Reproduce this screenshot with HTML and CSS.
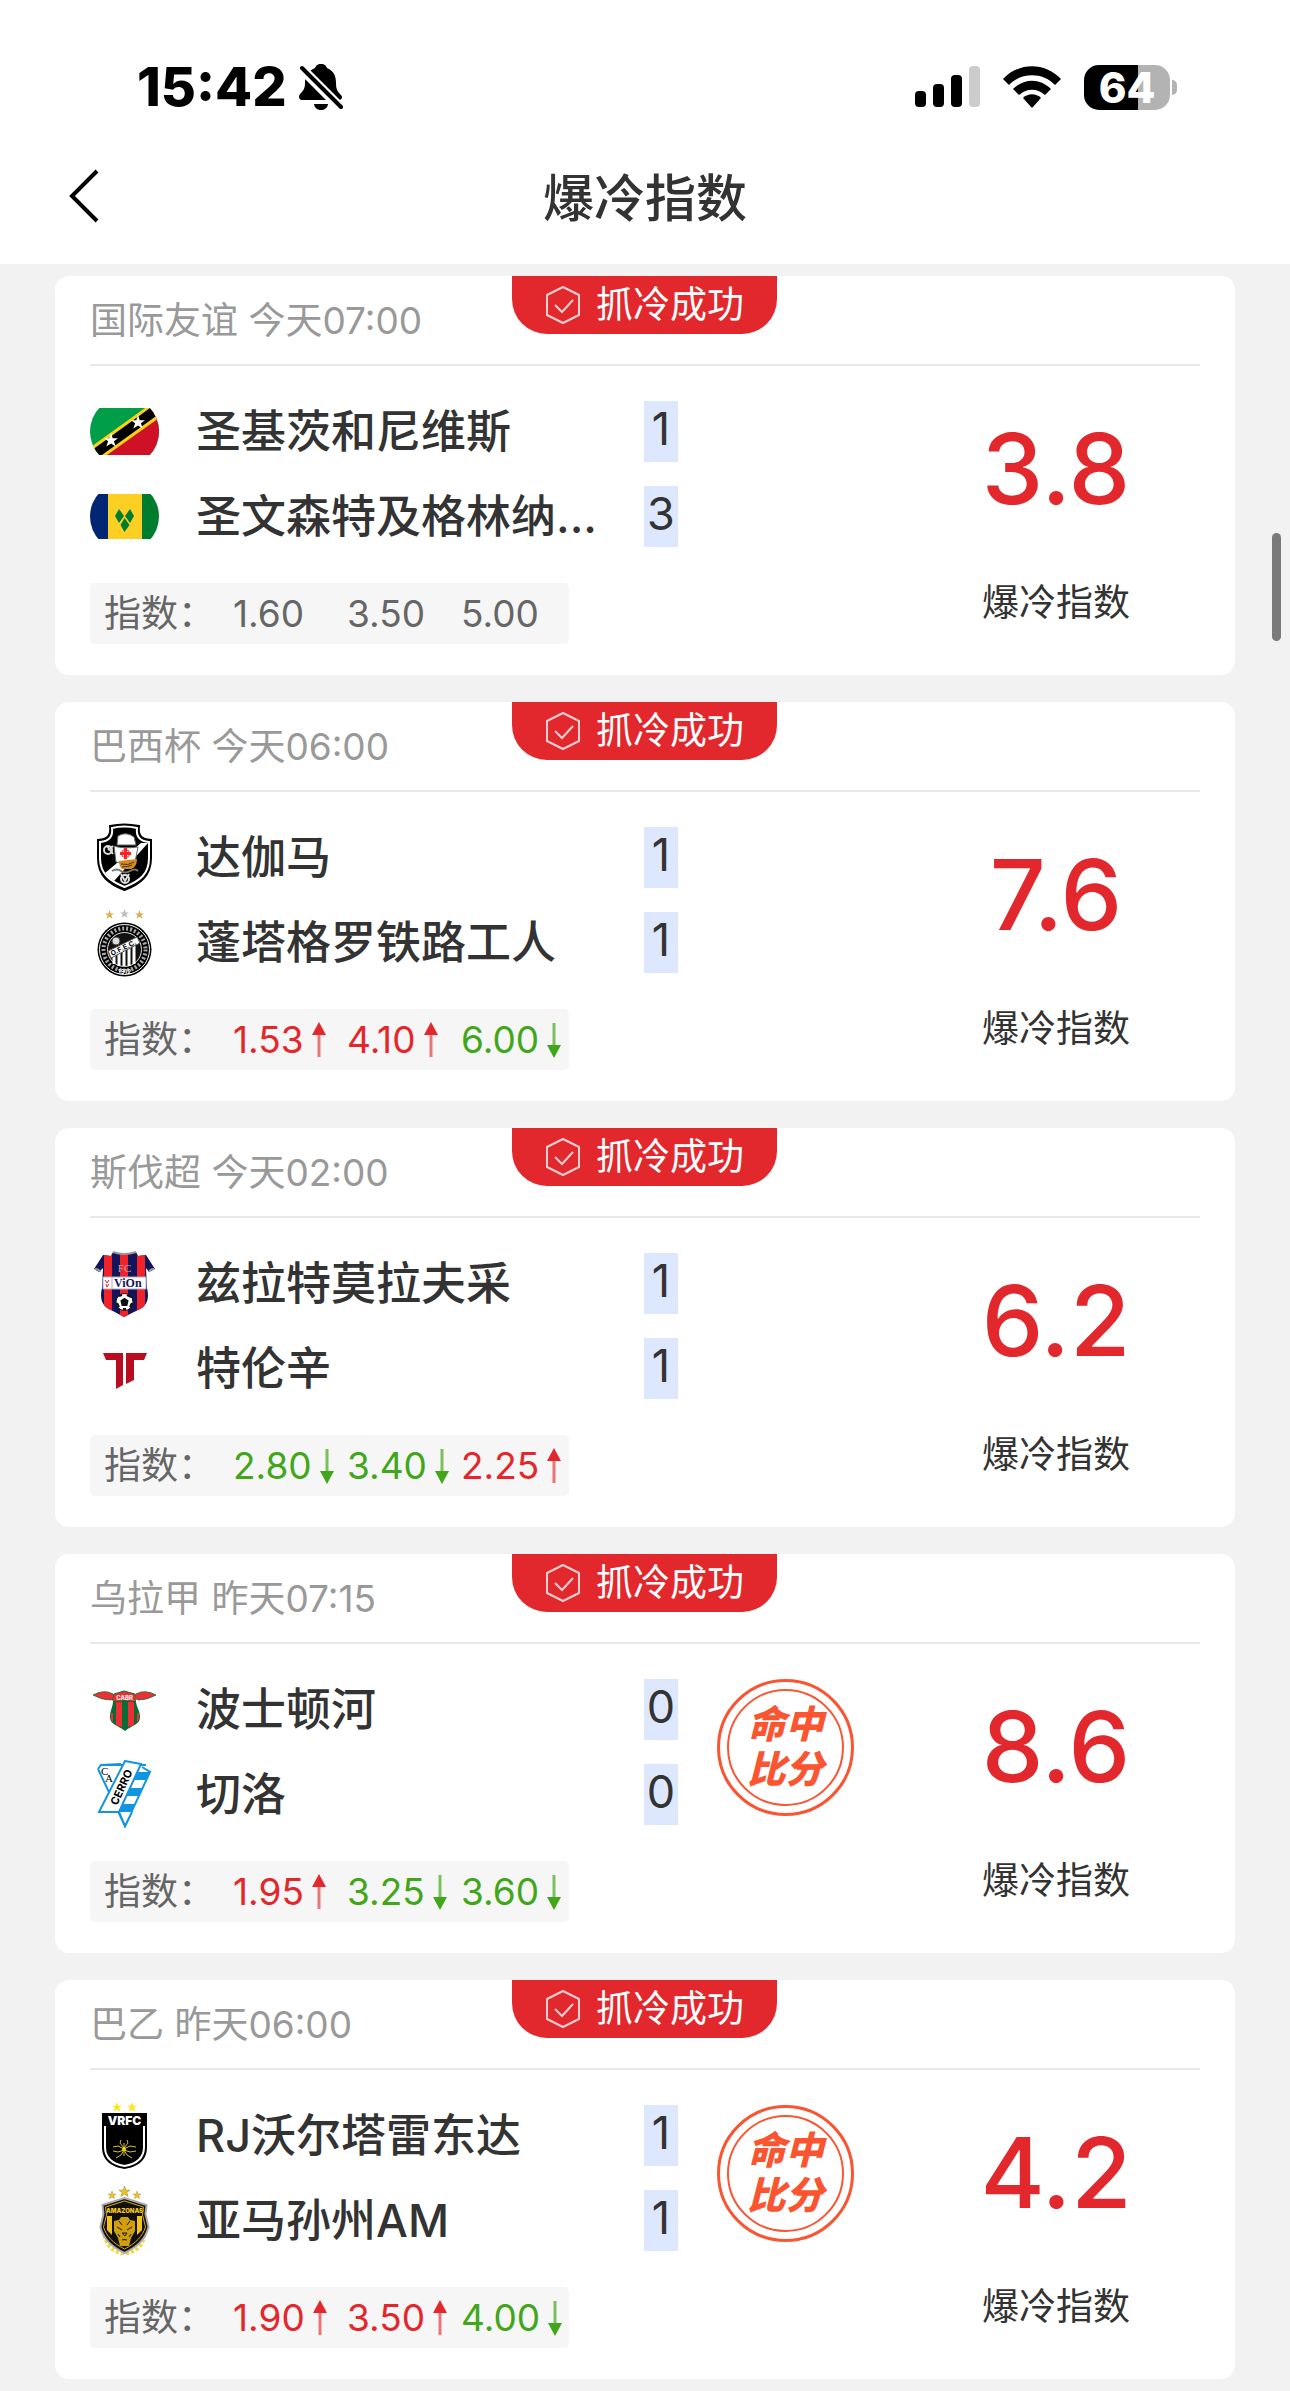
FILE: index.html
```html
<!DOCTYPE html>
<html lang="zh-CN">
<head>
<meta charset="utf-8">
<meta name="viewport" content="width=device-width, initial-scale=1">
<title>爆冷指数</title>
<link rel="stylesheet" href="styles.css">
</head>
<body>
<!-- 公用图标 -->
<svg class="defs" width="0" height="0" aria-hidden="true">
	<symbol id="star" viewBox="0 0 24 24"><path d="M12 0l3 9h9l-7 5 3 9-8-5-8 5 3-9-7-5h9z"/></symbol>
	<symbol id="up" viewBox="0 0 14 36"><path d="M7 12v23" stroke="#ea7478" stroke-width="3"/><path d="M7 0l7 13H0z" fill="#e2282d"/></symbol>
	<symbol id="down" viewBox="0 0 14 36"><path d="M7 1v23" stroke="#7cc05e" stroke-width="3"/><path d="M7 36l7-13H0z" fill="#42a61a"/></symbol>
	<symbol id="hexagon" viewBox="0 0 36 38"><path d="M18 1l16 8v20l-16 8-16-8V9z" fill="none" stroke="#f9d0d1" stroke-width="2" stroke-linejoin="round"/><path d="M10 19l7 7 11-12" fill="none" stroke="#f9d0d1" stroke-width="2"/></symbol>
</svg>

<header class="top">
	<div class="status">
		<span class="time">15:42</span>
		<svg class="bell" viewBox="0 0 44 46" width="44" height="46">
			<path d="M22 0c4 0 5 2 6 4 7 3 9 8 9 15 0 7 2 9 5 12 2 2 1 5-2 5H4c-4 0-5-3-3-6 3-3 5-5 5-11 0-8 3-12 10-15 1-2 2-4 6-4z"/>
			<path d="M15 40h14c-1 8-13 8-14 0z"/>
			<path d="M2 4l40 40" stroke="#fff" stroke-width="10"/>
			<path d="M3 4l39 39" stroke="#000" stroke-width="4" stroke-linecap="round"/>
		</svg>
		<div class="status-right">
			<svg viewBox="0 0 65 42" width="65" height="42">
				<rect y="25" width="11" height="16" rx="4"/><rect x="18" y="18" width="11" height="23" rx="4"/>
				<rect x="36" y="9" width="11" height="32" rx="4"/><rect x="54" width="11" height="41" rx="4" fill="#ccc"/>
			</svg>
			<svg viewBox="0 0 58 42" width="58" height="42">
				<path d="M0 13C16-4 42-4 58 13l-6 6C40 6 18 6 6 19z"/>
				<path d="M10 23c11-11 27-11 38 0l-6 6c-8-7-18-7-26 0z"/>
				<path d="M20 32c5-5 13-5 18 0l-9 10z"/>
			</svg>
			<div class="battery"><span>64</span></div>
		</div>
	</div>
	<div class="nav">
		<button type="button" class="back" aria-label="返回">
			<svg viewBox="0 0 30 54" width="30" height="54"><path d="M28 2L3 27l25 25" fill="none" stroke="#000" stroke-width="4"/></svg>
		</button>
		<h1>爆冷指数</h1>
	</div>
</header>

<main class="list">
	<section class="card">
		<div class="head">国际友谊 今天07:00
			<div class="tag"><svg width="36" height="38"><use href="#hexagon"/></svg>抓冷成功</div>
		</div>
		<div class="body">
			<div class="match">
				<div class="team">
					<svg class="logo" viewBox="0 0 69 69">
						<clipPath id="c1"><circle cx="34.500" cy="34.500" r="34.500"/></clipPath>
						<g clip-path="url(#c1)">
							<path d="M0 11h69v47H0z" fill="#009e49"/><path d="M69 11v47H9z" fill="#ce1126"/>
							<path d="M-2 52L55 11h14v10L17 58H2z" fill="#fcd116"/><path d="M-2 56L60 11h9v6L12 58H0z" fill="#000"/>
						</g>
						<g fill="#fff"><use href="#star" x="14" y="36" width="14" height="14"/><use href="#star" x="41" y="18" width="14" height="14"/></g>
					</svg>
					<span class="name">圣基茨和尼维斯</span><span class="score">1</span>
				</div>
				<div class="team">
					<svg class="logo" viewBox="0 0 69 69">
						<g clip-path="url(#c1)"><path d="M0 12h18v45H0z" fill="#002674"/><path d="M18 12h34v45H18z" fill="#fcd022"/><path d="M52 12h17v45H52z" fill="#007c2e"/></g>
						<path d="M29 27l5 7-5 7-4-7zM40 27l4 7-4 7-5-7zM34.500 36l5 7-5 7-4-7z" fill="#007c2e"/>
					</svg>
					<span class="name">圣文森特及格林纳...</span><span class="score">3</span>
				</div>
				<div class="odds"><span class="label">指数：</span><span>1.60</span><span>3.50</span><span>5.00</span></div>
			</div>
			<div class="index"><strong>3.8</strong><span>爆冷指数</span></div>
		</div>
	</section>

	<section class="card">
		<div class="head">巴西杯 今天06:00
			<div class="tag"><svg width="36" height="38"><use href="#hexagon"/></svg>抓冷成功</div>
		</div>
		<div class="body">
			<div class="match">
				<div class="team">
					<svg class="logo" viewBox="0 0 69 69">
						<path d="M20 3q14-3 29 0c-1 7 0 13 12 14v18c0 18-11 26-26.500 32C19 61 8 53 8 35V17c12-1 13-7 12-14z" fill="#000" stroke="#000" stroke-width="2"/>
						<path d="M22 5q12-3 25 0c-1 8 2 13 12 14v16c0 16-9 23-24.500 29C20 58 10 51 10 35V19c10-1 13-6 12-14z" fill="none" stroke="#fff" stroke-width="2"/>
						<path d="M58 20L24 58q-6-4-9-8l36-30z" fill="#fff"/>
						<path d="M24 23q8 3 24 1l-3 15q-10 3-19 0zM28 13q8-5 16 1l2 8H27z" fill="#fff" stroke="#666"/>
						<path d="M35.500 25v11M30 30.500h11" stroke="#f22" stroke-width="3"/><circle cx="35.500" cy="30.500" r="4" fill="none" stroke="#f22"/>
						<path d="M29 38l18-2q0 8-6 10h-9q-3-3-3-8z" fill="#cf8b1c"/><path d="M31 41q7 2 13-2M32 44q6 0 10-2" stroke="#543407" fill="none"/>
						<path d="M22 48q5-3 9 0t9 0 8 0" fill="none" stroke="#777" stroke-width="2"/>
						<g fill="none" stroke="#ddd" stroke-width="2"><circle cx="18" cy="27" r="4"/><path d="M17 23l6 8m0-8l-5 4"/><circle cx="35" cy="56" r="4"/><path d="M31 51l4 7 4-7"/></g>
					</svg>
					<span class="name">达伽马</span><span class="score">1</span>
				</div>
				<div class="team">
					<svg class="logo" viewBox="0 0 69 69">
						<g fill="#dcae4b"><use href="#star" x="15" y="2" width="9" height="9"/><use href="#star" x="45" y="2" width="9" height="9"/><use href="#star" x="30" y="1" width="9" height="9" fill="#bbb"/></g>
						<circle cx="34.500" cy="41.500" r="27" fill="#000"/><circle cx="34.500" cy="41.500" r="25" fill="none" stroke="#fff"/>
						<circle cx="34.500" cy="41.500" r="21" fill="none" stroke="#aaa" stroke-width="4" stroke-dasharray="2 2"/>
						<circle cx="34.500" cy="41.500" r="17" fill="#111" stroke="#ddd"/>
						<path d="M24 46v10M29 44v14M34 42v16M39 40v18M44 38v18" stroke="#fff" stroke-width="3"/>
						<path d="M18 43l29-14 3 6-29 15z" fill="#fff" stroke="#555"/><circle cx="26" cy="33" r="4" fill="#ddd" stroke="#444"/>
						<text x="22" y="48" font-size="7" font-weight="700" transform="rotate(-26 22 48)">O.F.E.C.</text>
						<text x="34.500" y="66" font-size="6" font-weight="700" text-anchor="middle" fill="#fff">1912</text>
					</svg>
					<span class="name">蓬塔格罗铁路工人</span><span class="score">1</span>
				</div>
				<div class="odds"><span class="label">指数：</span><span class="red">1.53<svg><use href="#up"/></svg></span><span class="red">4.10<svg><use href="#up"/></svg></span><span class="green">6.00<svg><use href="#down"/></svg></span></div>
			</div>
			<div class="index"><strong>7.6</strong><span>爆冷指数</span></div>
		</div>
	</section>

	<section class="card">
		<div class="head">斯伐超 今天02:00
			<div class="tag"><svg width="36" height="38"><use href="#hexagon"/></svg>抓冷成功</div>
		</div>
		<div class="body">
			<div class="match">
				<div class="team">
					<svg class="logo" viewBox="0 0 69 69">
						<clipPath id="c2"><path d="M23 3q11 4 23 0l2 4 8-1 9 14-6 3-3-4 1 20c3 12-1 19-9 22l-14 7-13-7c-8-3-12-10-9-22l1-20-4 4-5-3 9-14 8 1z"/></clipPath>
						<g clip-path="url(#c2)"><path d="M0 0h69v69H0z" fill="#14145a"/><path d="M14 0h8v69h-8zM30 0h8v69h-8zM47 0h8v69h-8z" fill="#f1232a"/></g>
						<path d="M23 3q11 4 23 0M5 20q4 0 5 3M64 20q-4 0-5 3" fill="none" stroke="#999" stroke-width="2"/>
						<path d="M13 28h43v12H13z" fill="#fff" stroke="#aac"/>
						<path d="M15 31l2 3 2-3M16 35l1 3 2-3" fill="none" stroke="#e22"/><path d="M22 28v12" stroke="#aac"/>
						<text x="24" y="38" font-size="12" font-weight="700" fill="#14145a" class="serif">ViOn</text>
						<text x="34.500" y="23" font-size="11" text-anchor="middle" fill="#b9a9b5" class="serif">FC</text>
						<circle cx="34.500" cy="53" r="8.500" fill="#fff" stroke="#111"/>
						<path d="M34.500 50l3 2-1 4h-4l-1-4zM29 47l3-1M37 46l4 2M27 54l2 4M42 54l-2 4M33 60h3" fill="#111" stroke="#111" stroke-width="2"/>
					</svg>
					<span class="name">兹拉特莫拉夫采</span><span class="score">1</span>
				</div>
				<div class="team">
					<svg class="logo" viewBox="0 0 69 69"><path d="M13 19h20v32l-7 4V26H16zM36 19h21l-3 7H44v20l-8 4z" fill="#ba0c20"/></svg>
					<span class="name">特伦辛</span><span class="score">1</span>
				</div>
				<div class="odds"><span class="label">指数：</span><span class="green">2.80<svg><use href="#down"/></svg></span><span class="green">3.40<svg><use href="#down"/></svg></span><span class="red">2.25<svg><use href="#up"/></svg></span></div>
			</div>
			<div class="index"><strong>6.2</strong><span>爆冷指数</span></div>
		</div>
	</section>

	<section class="card">
		<div class="head">乌拉甲 昨天07:15
			<div class="tag"><svg width="36" height="38"><use href="#hexagon"/></svg>抓冷成功</div>
		</div>
		<div class="body">
			<div class="match">
				<div class="team">
					<svg class="logo" viewBox="0 0 69 69">
						<path d="M23 26h23c0 6 4 9 4 16 0 8-8 8-15 14-7-6-15-6-15-14 0-7 3-10 3-16z" fill="#0a6b35"/>
						<path d="M26 27h6v25l-6-2zM38 27h6v23l-6 2zM21 38h2v9l-2-2zM47 38h2v7l-2 2z" fill="#ee2e34"/>
						<path d="M24 19l10-3 11 3 3 3-4 5q-10-3-20 0l-3-5z" fill="#ee2e34" stroke="#0a6b35"/>
						<path d="M3 20q11-6 20-1l1 3-3 3q-9 0-18-5zM66 20q-11-6-20-1l-1 3 3 3q9 0 18-5z" fill="#ee2e34" stroke="#3d6b45"/>
						<text x="34.500" y="25" font-size="6" font-weight="700" text-anchor="middle" fill="#fff">CABR</text>
					</svg>
					<span class="name">波士顿河</span><span class="score">0</span>
				</div>
				<div class="team">
					<svg class="logo" viewBox="0 0 69 69">
						<path d="M12 5h44M8 9l3-4 20-1M8 9l27 57 25-54-8-5" fill="#fff" stroke="#1295e0" stroke-width="2"/>
						<path d="M48 12h12l-4 8H44zM39 28h14l-4 8H35zM32 44h13l-4 8H28z" fill="#1295e0"/>
						<path d="M35 1l16 3-22 48H9z" fill="#fff" stroke="#1295e0" stroke-width="2"/><path d="M29 52l6 14 7-14" fill="#fff" stroke="#1295e0" stroke-width="2"/>
						<text x="27" y="46" font-size="11" font-weight="700" transform="rotate(-65 27 46)">CERRO</text>
						<text x="11" y="15" font-size="11" class="serif">C</text><text x="15" y="22" font-size="11" class="serif">A</text>
					</svg>
					<span class="name">切洛</span><span class="score">0</span>
				</div>
				<div class="odds"><span class="label">指数：</span><span class="red">1.95<svg><use href="#up"/></svg></span><span class="green">3.25<svg><use href="#down"/></svg></span><span class="green">3.60<svg><use href="#down"/></svg></span></div>
			</div>
			<div class="stamp">命中<br>比分</div>
			<div class="index"><strong>8.6</strong><span>爆冷指数</span></div>
		</div>
	</section>

	<section class="card">
		<div class="head">巴乙 昨天06:00
			<div class="tag"><svg width="36" height="38"><use href="#hexagon"/></svg>抓冷成功</div>
		</div>
		<div class="body">
			<div class="match">
				<div class="team">
					<svg class="logo" viewBox="0 0 69 69">
						<g fill="#fbe61e"><use href="#star" x="22" y="1" width="10" height="10"/><use href="#star" x="37" y="1" width="10" height="10"/></g>
						<path d="M12 12h45v34c0 14-10 20-22.500 22C22 66 12 60 12 46z" fill="#000"/>
						<path d="M15 25v21c0 11 8 17 19.500 19C46 63 54 57 54 46V25" fill="none" stroke="#fff" stroke-width="2"/>
						<text x="34.500" y="24" font-size="12" font-weight="900" text-anchor="middle" fill="#fff">VRFC</text>
						<path d="M34 47l-4-5 1-3M34 47l4-5-1-3M34 48l-6-3-5 1M34 48l6-3 6 1M34 49l-6 2-5-1M34 49l6 2 6-1M34 49l-3 5-5 3M34 49l3 5 5 3M34 42v13" fill="none" stroke="#d8c220"/>
						<circle cx="34" cy="48" r="2" fill="#e8cf22"/>
					</svg>
					<span class="name">RJ沃尔塔雷东达</span><span class="score">1</span>
				</div>
				<div class="team">
					<svg class="logo" viewBox="0 0 69 69">
						<g fill="#f3c31c" stroke="#8c7420"><use href="#star" x="18" y="5" width="8" height="8"/><use href="#star" x="29" y="0" width="11" height="11"/><use href="#star" x="43" y="5" width="8" height="8"/></g>
						<path d="M15 49q3 16 19.500 18Q51 65 54 49" fill="none" stroke="#f3d84a" stroke-width="5" stroke-dasharray="3 2"/>
						<path d="M34.500 12l22 7-1 9 3 13c-3 12-10 19-24 26-14-7-21-14-24-26l3-13-1-9z" fill="#111" stroke="#aaa" stroke-width="2"/>
						<path d="M34.500 15l19 6-1 8 3 12c-3 9-9 16-21 22-12-6-18-13-21-22l3-12-1-8z" fill="none" stroke="#d9a913"/>
						<path d="M17 30v14l5 5V30zM52 30v14l-5 5V30z" fill="#f3c31c"/>
						<path d="M24 35l5-1 2-3h7l2 3 5 1v10l-4 7-2 8h-9l-2-8-4-7z" fill="#cf9f10"/>
						<path d="M27 41l5 3M42 41l-5 3M32 47h5l-2 3zM32 54q2-1 5 0M29 35l3 4M40 35l-3 4M28 48l2 3M41 48l-2 3" fill="none" stroke="#1a1405"/>
						<text x="34.500" y="27" font-size="6" font-weight="900" text-anchor="middle" fill="#f3c31c">AMAZONAS</text>
					</svg>
					<span class="name">亚马孙州AM</span><span class="score">1</span>
				</div>
				<div class="odds"><span class="label">指数：</span><span class="red">1.90<svg><use href="#up"/></svg></span><span class="red">3.50<svg><use href="#up"/></svg></span><span class="green">4.00<svg><use href="#down"/></svg></span></div>
			</div>
			<div class="stamp">命中<br>比分</div>
			<div class="index"><strong>4.2</strong><span>爆冷指数</span></div>
		</div>
	</section>
</main>
<div class="scrollbar"></div>
</body>
</html>
```

FILE: styles.css
```css
*{box-sizing:border-box;}
body,h1{margin:0;padding:0;}
body{background:#f2f2f2;color:#333;font:37px/52px Inter,"Noto Sans CJK SC",sans-serif;}
svg{display:block;flex:none;}
.defs{position:absolute;}
.serif{font-family:"Liberation Serif",serif;}

/* 顶部 */
.top{background:#fff;padding-top:55px;}
.status{display:flex;align-items:center;height:64px;padding:0 112px 0 137px;}
.time{font-size:54px;font-weight:800;color:#000;}
.bell{margin-left:12px;}
.status-right{display:flex;align-items:center;gap:23px;margin-left:auto;}
.battery{position:relative;width:86px;height:45px;margin-right:8px;border-radius:15px;background:linear-gradient(90deg,#000 63%,#b3b3b3 63%);color:#fff;font-size:42px;line-height:45px;font-weight:800;text-align:center;}
.battery:after{content:"";position:absolute;left:88px;top:15px;width:5px;height:15px;border-radius:0 5px 5px 0;background:#b3b3b3;}
.nav{position:relative;height:145px;padding-top:48px;}
.nav h1{font-size:51px;line-height:64px;font-weight:500;text-align:center;}
.back{position:absolute;left:61px;top:42px;padding:8px;border:0;background:none;}

/* 比赛列表 */
.list{padding:12px 55px;}
.card{background:#fff;border-radius:14px;padding:0 35px 31px;margin-bottom:27px;}
.card:last-child{margin-bottom:0;}
.head{position:relative;height:90px;padding-top:19px;border-bottom:2px solid #e8e8e8;color:#999;}
.tag{position:absolute;top:0;left:50%;display:flex;align-items:center;gap:15px;width:265px;height:58px;margin-left:-133px;padding-left:33px;border-radius:0 0 35px 35px;background:#e2282d;color:#fff;}
.body{display:flex;align-items:flex-start;padding-top:35px;}
.match{width:588px;}
.team{display:flex;align-items:center;height:61px;margin-bottom:24px;}
.logo{width:69px;height:69px;margin-right:37px;}
.name{margin-right:auto;white-space:nowrap;font-size:45px;line-height:61px;font-weight:500;}
.score{width:34px;height:61px;background:#dde7fd;font-size:45px;line-height:56px;text-align:center;}
.odds{display:flex;align-items:center;width:479px;height:61px;margin-top:36px;border-radius:5px;background:#f6f6f6;color:#666;}
.odds span{display:flex;flex:none;align-items:center;gap:8px;width:114px;}
.odds .label{width:143px;padding-left:14px;}
.odds span:last-child{width:auto;}
.odds svg{width:14px;height:36px;}
.odds .red{color:#e2282d;}
.odds .green{color:#42a61a;}
.stamp{width:137px;height:137px;margin-left:39px;padding-top:20px;border:3px solid #fb5430;border-radius:50%;outline:2px solid #fb5430;outline-offset:-12px;color:#fb5430;font-size:38px;line-height:45px;font-weight:900;font-style:italic;text-align:center;}
.index{display:flex;flex-direction:column;align-items:center;gap:60px;width:288px;margin-left:auto;padding-top:20px;}
.index strong{color:#e2282d;font-size:98px;line-height:96px;font-weight:500;}

.scrollbar{position:absolute;top:533px;right:9px;width:9px;height:108px;border-radius:5px;background:#7a7a7a;}
```
